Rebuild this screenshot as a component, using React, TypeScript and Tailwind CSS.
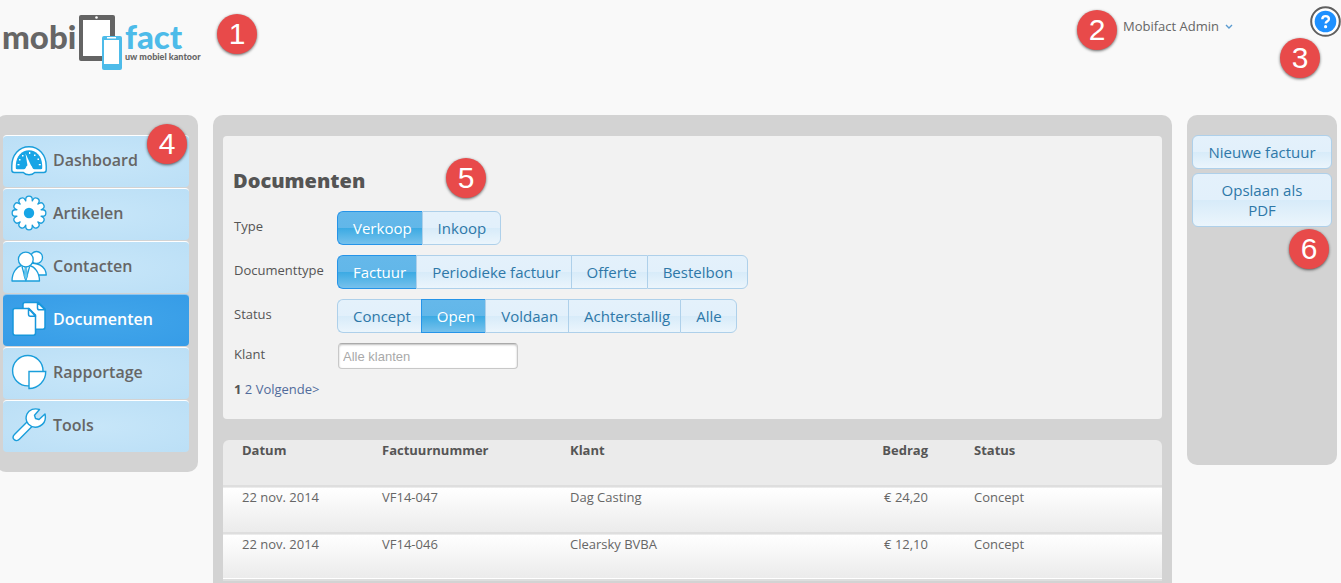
import { useState, type ReactNode } from 'react';
import clsx from 'clsx';

const stroke = '#1a9edb';

const teeth = [0, 30, 60, 90, 120, 150, 180, 210, 240, 270, 300, 330];

const icons: Record<string, ReactNode> = {
  Dashboard: (
    <>
      <path d="M.8 24C.8 13 8 4.700 18 4.700S35.200 13 35.200 24v4c0 1.700-1 2.500-2.500 2.500h-9c-1.500 1.600-3.300 2.300-5.700 2.300s-4.200-.7-5.700-2.300h-9C1.800 30.500.8 29.700.8 28z" fill="#fff" stroke={stroke} strokeWidth="1.400" />
      <path d="M4.800 26v-3C5.300 14 11 8.300 18 8.300S30.700 14 31.200 23v3c0 .8-.4 1.200-1.200 1.200H6c-.8 0-1.200-.4-1.200-1.200z" fill="#17a5e6" />
      <path d="M14.500 11.500l5.800 12.500-3.500 1.500z" fill="#fff" />
      <path d="M12.500 28.500c.8-1.500 2-2 2.300-2.800.5-1.700 1.700-2.700 3.300-2.700s2.900 1 3.300 2.700c.2.800 1.500 1.300 2.300 2.800z" fill="#fff" />
      <g fill="#fff">
        <rect x="6.500" y="22" width="2" height="1.300" />
        <rect x="8" y="17" width="1.500" height="1.500" />
        <rect x="11" y="13" width="1.500" height="1.500" />
        <rect x="18" y="10" width="1.300" height="2" />
        <rect x="23" y="12.500" width="1.500" height="1.500" />
        <rect x="26.500" y="16.500" width="1.500" height="1.500" />
        <rect x="27.800" y="22" width="2" height="1.300" />
      </g>
    </>
  ),
  Artikelen: (
    <>
      <g fill="#fff" stroke={stroke} strokeWidth="2.600">
        {teeth.map((a) => (
          <rect key={a} x="15.400" y="1.800" width="5.200" height="9" rx="2.600" transform={`rotate(${a} 18 18)`} />
        ))}
      </g>
      <g fill="#fff">
        {teeth.map((a) => (
          <rect key={a} x="15.400" y="1.800" width="5.200" height="9" rx="2.600" transform={`rotate(${a} 18 18)`} />
        ))}
        <circle cx="18" cy="18" r="12" />
      </g>
      <circle cx="18" cy="18" r="5.200" fill="#17a5e6" />
    </>
  ),
  Contacten: (
    <g fill="#fff" stroke={stroke} strokeWidth="1.300" strokeLinejoin="round">
      <path d="M19 15.500c6-1 15.500 1.500 16.300 11.500H20z" />
      <circle cx="25.500" cy="9.500" r="6" />
      <path d="M1 33c0-9 5-14.500 9.500-15.300h8C23.500 18.500 28.500 24 28.500 33z" />
      <path d="M11 18.500L14.800 32.500 18.600 18.500" />
      <path d="M13.600 18.500h2.400l-.3 2 1 7.500-1.900 4.500-1.900-4.500 1-7.500z" fill="#68c7ee" strokeWidth=".5" />
      <circle cx="14.800" cy="11.500" r="7.400" />
    </g>
  ),
  Documenten: (
    <g fill="#fff" stroke="#1797dc" strokeWidth="1.500" strokeLinejoin="round">
      <path d="M14 1.500h13.500L34 8v18c0 1.500-.7 2.200-2 2.200H14c-1.500 0-2-.7-2-2.200V3.500c0-1.500.7-2 2-2z" />
      <path d="M26.500 1.500V7c0 1.200.7 1.800 1.800 1.800H34z" />
      <path d="M4 7.500h14L24.500 14v18c0 1.500-.7 2.200-2 2.200H4c-1.500 0-2-.7-2-2.200V9.500c0-1.500.7-2 2-2z" />
      <path d="M17.500 7.500V13c0 1.500.7 2.300 1.800 2.300h5.200z" />
    </g>
  ),
  Rapportage: (
    <g fill="#fff" stroke={stroke} strokeWidth="1.400">
      <circle cx="16.800" cy="16.700" r="15.200" />
      <path d="M18 17.500h16.700A16.700 16.700 0 0 1 18 34.500z" />
    </g>
  ),
  Tools: (
    <g fill="#fff" stroke={stroke} strokeWidth="1.400" strokeLinejoin="round">
      <path d="M17 14L3.700 27.200c-2 2-2 4-.6 5.400s3.600 1.400 5.500-.5L22 18.500z" />
      <path d="M28.500 2.500C23.500.8 18 2.500 16 7c-1.600 3.700-1 7.500 1.500 10.200 3 3 7.500 3.800 11.500 1.800 4.300-2.200 6.200-6.500 5-12l-6 5.500-3.500-1-1-3.300z" />
    </g>
  ),
};

const menu = ['Dashboard', 'Artikelen', 'Contacten', 'Documenten', 'Rapportage', 'Tools'];

const filters = [
  { label: 'Type', options: ['Verkoop', 'Inkoop'], initial: 'Verkoop' },
  { label: 'Documenttype', options: ['Factuur', 'Periodieke factuur', 'Offerte', 'Bestelbon'], initial: 'Factuur' },
  { label: 'Status', options: ['Concept', 'Open', 'Voldaan', 'Achterstallig', 'Alle'], initial: 'Open' },
];

const invoices = [
  { date: '22 nov. 2014', number: 'VF14-047', client: 'Dag Casting', amount: '€ 24,20', status: 'Concept' },
  { date: '22 nov. 2014', number: 'VF14-046', client: 'Clearsky BVBA', amount: '€ 12,10', status: 'Concept' },
];

const glass = 'bg-[linear-gradient(#e4f1fb_0%,#e2f0fb_50%,#d7ebf9_50%,#ebf5fc_100%)] border-[#aed0ea] text-[#2e78a8]';
const glassActive = 'bg-[linear-gradient(#65b8ea_0%,#62b7e9_50%,#3baae3_50%,#76c1ec_100%)] border-[#2694e8] text-white';

function Badge({ n, className }: { n: number; className: string }) {
  return (
    <span
      className={clsx(
        'absolute z-10 flex size-10 items-center justify-center rounded-full bg-[#e84a4a] font-["Liberation_Sans",sans-serif] text-[30px] leading-none text-white shadow-[0_1px_3px_rgba(0,0,0,0.6)]',
        className,
      )}
    >
      {n}
    </span>
  );
}

function Logo() {
  return (
    <svg width="206" height="72" viewBox="0 0 206 72" role="img" aria-label="mobifact, uw mobiel kantoor">
      <text x="2" y="49" fill="#666" fontFamily="Lato, sans-serif" fontWeight="900" fontSize="33">mobi</text>
      <rect x="79" y="15" width="36" height="46" rx="2" fill="#646464" />
      <rect x="83" y="20" width="27" height="36" fill="#fff" />
      <circle cx="96.500" cy="17.500" r="1.300" fill="#fff" />
      <rect x="102" y="36" width="20" height="34" rx="2" fill="#4dbbe9" />
      <rect x="104" y="40" width="15" height="24" fill="#fff" />
      <rect x="107" y="37" width="9" height="1.500" fill="#fff" />
      <text x="125" y="49" fill="#4dbbe9" fontFamily="Lato, sans-serif" fontWeight="900" fontSize="33">fact</text>
      <text x="125" y="60" fill="#666" fontFamily="Lato, sans-serif" fontWeight="900" fontSize="9">uw mobiel kantoor</text>
    </svg>
  );
}

function ButtonSet({ label, options, initial }: { label: string; options: string[]; initial: string }) {
  const [value, setValue] = useState(initial);

  return (
    <div role="group" aria-label={label} className="flex">
      {options.map((option) => (
        <button
          key={option}
          type="button"
          aria-pressed={option === value}
          onClick={() => setValue(option)}
          className={clsx(
            'h-[34px] border-y border-l pr-2.5 pl-[15px] text-[15px] first:rounded-l-md last:rounded-r-md last:border-r last:pr-3.5',
            option === value ? glassActive : glass,
          )}
        >
          {option}
        </button>
      ))}
    </div>
  );
}

export default function App() {
  return (
    <div className="flex min-h-screen flex-col bg-[#f9f9f9] font-['Open_Sans',sans-serif] text-[13px] leading-[18px] text-[#666]">
      <header className="relative flex h-[115px] items-start">
        <Logo />
        <Badge n={1} className="top-3.5 left-[217px]" />
        <button type="button" className="mt-[17px] mr-[77px] ml-auto flex items-center gap-1.5">
          Mobifact Admin
          <svg width="8" height="5" viewBox="0 0 8 5" fill="none" stroke="#5a9bd0" strokeWidth="1.400">
            <path d="M1 1l3 3 3-3" />
          </svg>
        </button>
        <button type="button" aria-label="Help" className="mt-1.5">
          <svg width="31" height="31" viewBox="0 0 31 31">
            <circle cx="15.500" cy="15.500" r="14.300" fill="#fff" stroke="#5f5f5f" strokeWidth="2" />
            <circle cx="15.500" cy="15.500" r="10.800" fill="#1e90ff" />
            <path d="M12.300 13.300c0-2 1.400-3.200 3.300-3.200s3.300 1 3.300 2.800c0 2.400-3.200 2.300-3.200 4.700" fill="none" stroke="#fff" strokeWidth="2.400" />
            <circle cx="15.600" cy="20.700" r="1.600" fill="#fff" />
          </svg>
        </button>
        <Badge n={2} className="top-2.5 right-[224px]" />
        <Badge n={3} className="top-[38px] right-[21px]" />
      </header>

      <div className="flex flex-1 items-start gap-[15px] pr-1">
        <nav className="relative -ml-1 w-[202px] shrink-0 rounded-[10px] bg-[#d3d3d3] py-5 pr-[9px] pl-[7px]">
          <ul className="flex flex-col gap-px">
            {menu.map((item) => {
              const active = item === 'Documenten';
              return (
                <li key={item}>
                  <a
                    href="#"
                    className={clsx(
                      'flex h-[52px] items-center gap-1.5 rounded border-t pb-1 pl-2 text-base font-semibold',
                      active
                        ? 'border-[#8cc6f2] bg-[radial-gradient(#42a6ea,#369ce7)] text-white'
                        : 'border-white bg-[radial-gradient(#c7e6f9,#bbdff6)] text-[#666]',
                    )}
                  >
                    <svg width="36" height="36" viewBox="0 0 36 36">{icons[item]}</svg>
                    {item}
                  </a>
                </li>
              );
            })}
          </ul>
          <Badge n={4} className="top-[9px] right-[11px]" />
        </nav>

        <main className="min-w-0 flex-1 self-stretch rounded-t-[10px] bg-[#d3d3d3] px-2.5 pt-[21px]">
          <section className="relative rounded bg-[#f2f2f2] px-2.5 pt-8 pb-[21px] text-[#555]">
            <h1 className="text-xl leading-[26px] font-extrabold">Documenten</h1>
            <Badge n={5} className="top-[22px] left-[223px]" />
            <div className="mt-[17px] space-y-2.5">
              {filters.map((filter) => (
                <div key={filter.label} className="flex">
                  <span className="w-[104px] pt-1.5 pl-px">{filter.label}</span>
                  <ButtonSet {...filter} />
                </div>
              ))}
              <div className="flex">
                <label htmlFor="klant" className="w-[104px] pt-0.5 pl-px">Klant</label>
                <input
                  id="klant"
                  placeholder="Alle klanten"
                  className="ml-px h-[26px] w-[180px] rounded border border-[#c8c8c8] border-t-[#aaa] bg-white px-1 font-['Liberation_Sans',sans-serif] text-[13px] shadow-[inset_0_1px_2px_rgba(0,0,0,0.25)] placeholder:text-[#a9a9a9]"
                />
              </div>
            </div>
            <p className="mt-[11px] pl-px text-[#555]">
              <b>1</b> <a href="#" className="text-[#516b9b]">2</a> <a href="#" className="text-[#516b9b]">Volgende&gt;</a>
            </p>
          </section>

          <div className="mt-[21px] overflow-hidden rounded-t-md">
            <table className="w-full table-fixed text-left">
              <thead>
                <tr className="h-[46px] bg-[#ebebeb] align-top text-[#555]">
                  <th className="w-[140px] pt-px pl-[19px]">Datum</th>
                  <th className="w-[188px] pt-px pl-[19px]">Factuurnummer</th>
                  <th className="pt-px pl-[19px]">Klant</th>
                  <th className="w-[130px] pt-px pr-[27px] text-right">Bedrag</th>
                  <th className="w-[207px] pt-px pl-[19px]">Status</th>
                </tr>
              </thead>
              <tbody>
                {invoices.map((row) => (
                  <tr
                    key={row.number}
                    className="h-[47px] border-t-2 border-[#dedede] bg-linear-to-b from-white to-[#ebebeb] align-top last:border-b-2"
                  >
                    <td className="pt-px pl-[19px]">{row.date}</td>
                    <td className="pt-px pl-[19px]">{row.number}</td>
                    <td className="pt-px pl-[19px]">{row.client}</td>
                    <td className="pt-px pr-[27px] text-right">{row.amount}</td>
                    <td className="pt-px pl-[19px]">{row.status}</td>
                  </tr>
                ))}
              </tbody>
            </table>
          </div>
        </main>

        <aside className="relative flex min-h-[350px] w-[150px] shrink-0 flex-col gap-1 rounded-[10px] bg-[#d3d3d3] px-[5px] pt-5">
          <button type="button" className={clsx('rounded-md border px-3 py-1.5 text-[15px] leading-5', glass)}>
            Nieuwe factuur
          </button>
          <button type="button" className={clsx('rounded-md border px-3 py-1.5 text-[15px] leading-5', glass)}>
            Opslaan als<br />PDF
          </button>
          <Badge n={6} className="top-[114px] right-2" />
        </aside>
      </div>
    </div>
  );
}
